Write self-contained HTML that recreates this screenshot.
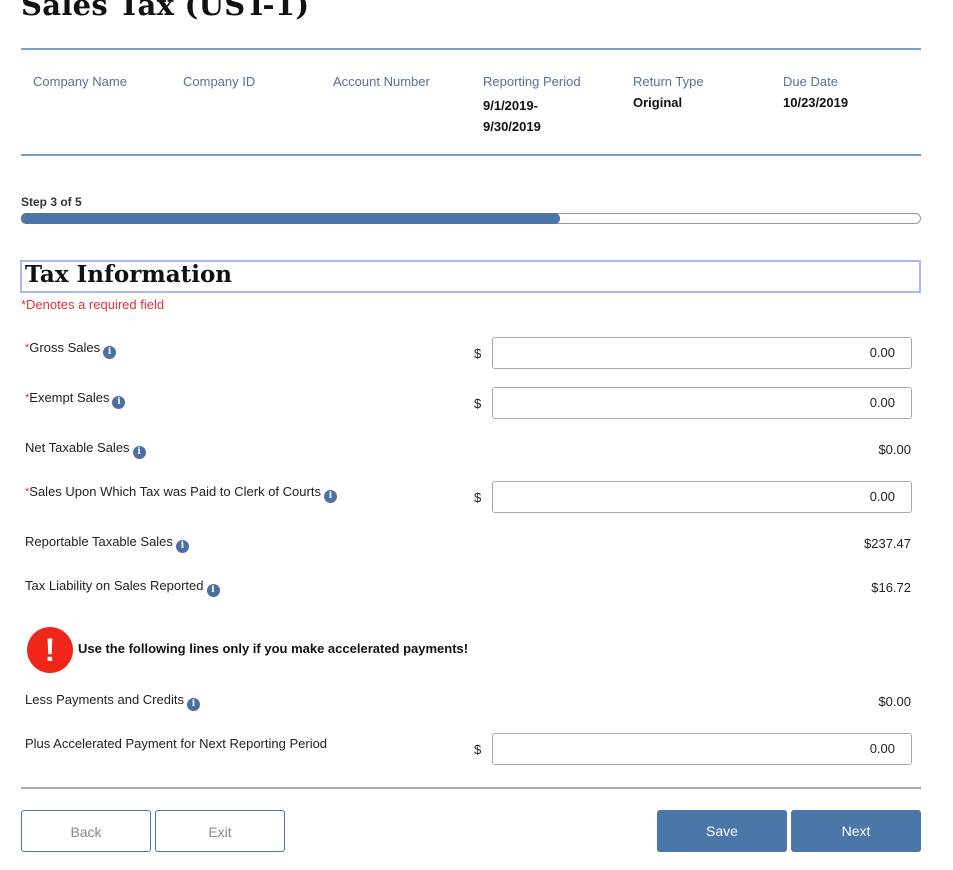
<!DOCTYPE html>
<html><head><meta charset="utf-8"><style>
*{margin:0;padding:0;box-sizing:border-box}
body{width:953px;height:870px;background:#fff;position:relative;overflow:hidden;font-family:"Liberation Sans",sans-serif;color:#222}
.a{position:absolute;white-space:nowrap}
h1{position:absolute;left:21px;top:-12px;font-family:"DejaVu Serif","Liberation Serif",serif;font-weight:bold;font-size:29px;color:#111;letter-spacing:0.3px}
.hl{position:absolute;left:21px;width:900px;height:2px;background:#7c9cc6}
.lab{font-size:13px;color:#5a6f9a}
.val{font-size:13px;font-weight:bold;color:#111}
.f{font-size:13px;color:#222;line-height:16px}
.req{color:#e0303a;font-size:11px;vertical-align:top}
.i{display:inline-block;width:13px;height:13px;border-radius:50%;background:#4a6fa5;color:#fff;font-size:9px;font-weight:bold;text-align:center;line-height:13px;vertical-align:-2px;margin-left:3px;font-family:"DejaVu Serif",serif}
.in{position:absolute;left:492px;width:420px;height:32px;border:1px solid #aaa;border-radius:3px;text-align:right;padding-right:16px;line-height:30px;font-size:13px}
.d{position:absolute;left:474px;font-size:13px}
.r{position:absolute;right:42px;font-size:13px}
.b{position:absolute;top:810px;width:130px;height:42px;border-radius:3px;text-align:center;line-height:42px;font-size:14px}
.o{border:1px solid #4a76a8;color:#8a8a8a}
.p{background:#4a76a8;color:#fff}
</style></head><body>
<h1>Sales Tax (UST-1)</h1>
<div class="hl" style="top:48px"></div>
<div class="a lab" style="left:33px;top:74px">Company Name</div>
<div class="a lab" style="left:183px;top:74px">Company ID</div>
<div class="a lab" style="left:333px;top:74px">Account Number</div>
<div class="a lab" style="left:483px;top:74px">Reporting Period</div>
<div class="a lab" style="left:633px;top:74px">Return Type</div>
<div class="a lab" style="left:783px;top:74px">Due Date</div>
<div class="a val" style="left:483px;top:95px;line-height:21px">9/1/2019-<br>9/30/2019</div>
<div class="a val" style="left:633px;top:95px">Original</div>
<div class="a val" style="left:783px;top:95px">10/23/2019</div>
<div class="hl" style="top:154px"></div>
<div class="a" style="left:21px;top:195px;font-size:12px;font-weight:bold;color:#333">Step 3 of 5</div>
<div class="a" style="left:21px;top:213px;width:900px;height:11px;border:1px solid #999;border-radius:6px"></div>
<div class="a" style="left:21px;top:213px;width:539px;height:11px;background:#4a76a8;border-radius:5px"></div>
<div class="a" style="left:20px;top:260px;width:901px;height:33px;border:2px solid #a8b8f0"></div>
<div class="a" style="left:25px;top:261px;font-family:'DejaVu Serif','Liberation Serif',serif;font-weight:bold;font-size:23px;color:#111">Tax Information</div>
<div class="a" style="left:21px;top:297px;font-size:13px;color:#e0303a">*Denotes a required field</div>

<div class="a f" style="left:25px;top:340px"><span class="req">*</span>Gross Sales<span class="i">i</span></div>
<div class="d" style="top:346px">$</div><div class="in" style="top:337px">0.00</div>
<div class="a f" style="left:25px;top:390px"><span class="req">*</span>Exempt Sales<span class="i">i</span></div>
<div class="d" style="top:396px">$</div><div class="in" style="top:387px">0.00</div>
<div class="a f" style="left:25px;top:440px">Net Taxable Sales<span class="i">i</span></div>
<div class="r" style="top:442px">$0.00</div>
<div class="a f" style="left:25px;top:484px"><span class="req">*</span>Sales Upon Which Tax was Paid to Clerk of Courts<span class="i">i</span></div>
<div class="d" style="top:490px">$</div><div class="in" style="top:481px">0.00</div>
<div class="a f" style="left:25px;top:534px">Reportable Taxable Sales<span class="i">i</span></div>
<div class="r" style="top:536px">$237.47</div>
<div class="a f" style="left:25px;top:578px">Tax Liability on Sales Reported<span class="i">i</span></div>
<div class="r" style="top:580px">$16.72</div>
<div class="a" style="left:27px;top:627px;width:46px;height:46px;border-radius:50%;background:#f0261a;color:#fff;text-align:center;font-weight:bold;font-size:32px;line-height:46px">!</div>
<div class="a" style="left:78px;top:641px;font-size:13px;font-weight:bold;color:#111">Use the following lines only if you make accelerated payments!</div>
<div class="a f" style="left:25px;top:692px">Less Payments and Credits<span class="i">i</span></div>
<div class="r" style="top:694px">$0.00</div>
<div class="a f" style="left:25px;top:736px">Plus Accelerated Payment for Next Reporting Period</div>
<div class="d" style="top:742px">$</div><div class="in" style="top:733px">0.00</div>
<div class="a" style="left:21px;top:787px;width:900px;height:2px;background:#aaa"></div>
<div class="b o" style="left:21px">Back</div>
<div class="b o" style="left:155px">Exit</div>
<div class="b p" style="left:657px">Save</div>
<div class="b p" style="left:791px">Next</div>
</body></html>
